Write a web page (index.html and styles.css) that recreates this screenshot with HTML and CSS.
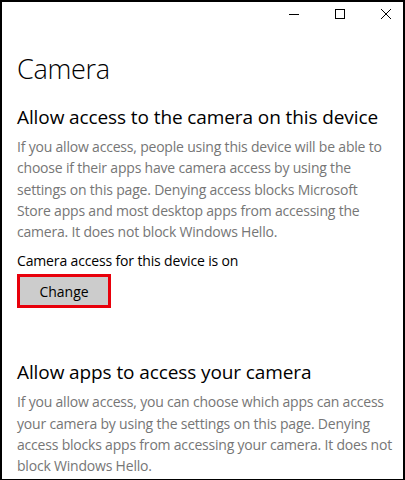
FILE: index.html
```html
<!DOCTYPE html>
<html>
<head>
<meta charset="utf-8">
<link rel="stylesheet" href="styles.css">
</head>
<body>
<div class="window">
  <div class="titlebar">
    <span class="ctl"><svg width="10" height="10" viewBox="0 0 10 10"><path d="M0 5.5H10" stroke="#000" stroke-width="1"/></svg></span>
    <span class="ctl"><svg width="10" height="10" viewBox="0 0 10 10"><rect x="0.5" y="0.5" width="9" height="9" fill="none" stroke="#000" stroke-width="1"/></svg></span>
    <span class="ctl"><svg width="10" height="10" viewBox="0 0 10 10"><path d="M0 0L10 10M10 0L0 10" stroke="#000" stroke-width="1"/></svg></span>
  </div>
  <div class="content">
    <h1 class="title">Camera</h1>
    <h2 class="heading">Allow access to the camera on this device</h2>
    <p class="desc">If you allow access, people using this device will be able to choose if their apps have camera access by using the settings on this page. Denying access blocks Microsoft Store apps and most desktop apps from accessing the camera. It does not block Windows Hello.</p>
    <p class="status">Camera access for this device is on</p>
    <button class="btn">Change</button>
    <h2 class="heading second">Allow apps to access your camera</h2>
    <p class="desc">If you allow access, you can choose which apps can access your camera by using the settings on this page. Denying access blocks apps from accessing your camera. It does not block Windows Hello.</p>
  </div>
</div>
</body>
</html>
```
FILE: styles.css
```css
html, body {
  margin: 0;
  padding: 0;
  background: #fff;
}
.window {
  box-sizing: border-box;
  width: 405px;
  height: 480px;
  border: 2px solid #000;
  border-bottom-width: 1px;
  overflow: hidden;
  font-family: "Open Sans", "Noto Sans", sans-serif;
  color: #000;
}
.titlebar {
  height: 28px;
  display: flex;
  justify-content: flex-end;
  align-items: flex-start;
  margin-right: -6px;
}
.ctl {
  width: 46px;
  height: 24px;
  display: flex;
  align-items: center;
  justify-content: center;
}
.content {
  padding: 0 0 0 15px;
}
.title {
  margin: 21px 0 0 0;
  font-size: 27px;
  font-weight: 300;
  line-height: 36px;
  letter-spacing: -0.3px;
}
.heading {
  margin: 16px 0 0 0;
  font-size: 19px;
  font-weight: 400;
  line-height: 28px;
  letter-spacing: -0.1px;
}
.desc {
  margin: 5px 0 0 0;
  font-size: 14px;
  line-height: 21.3px;
  color: #767676;
  padding-right: 10px;
  letter-spacing: -0.2px;
}
.status {
  margin: 8px 0 0 0;
  font-size: 14px;
  line-height: 21px;
  letter-spacing: -0.15px;
}
.btn {
  display: block;
  margin-top: 3px;
  width: 94px;
  height: 34px;
  background: #cccccc;
  border: 3px solid #e8000b;
  font-family: inherit;
  font-size: 14px;
  color: #000;
  padding: 0;
}
.second {
  margin-top: 50px;
}
```
